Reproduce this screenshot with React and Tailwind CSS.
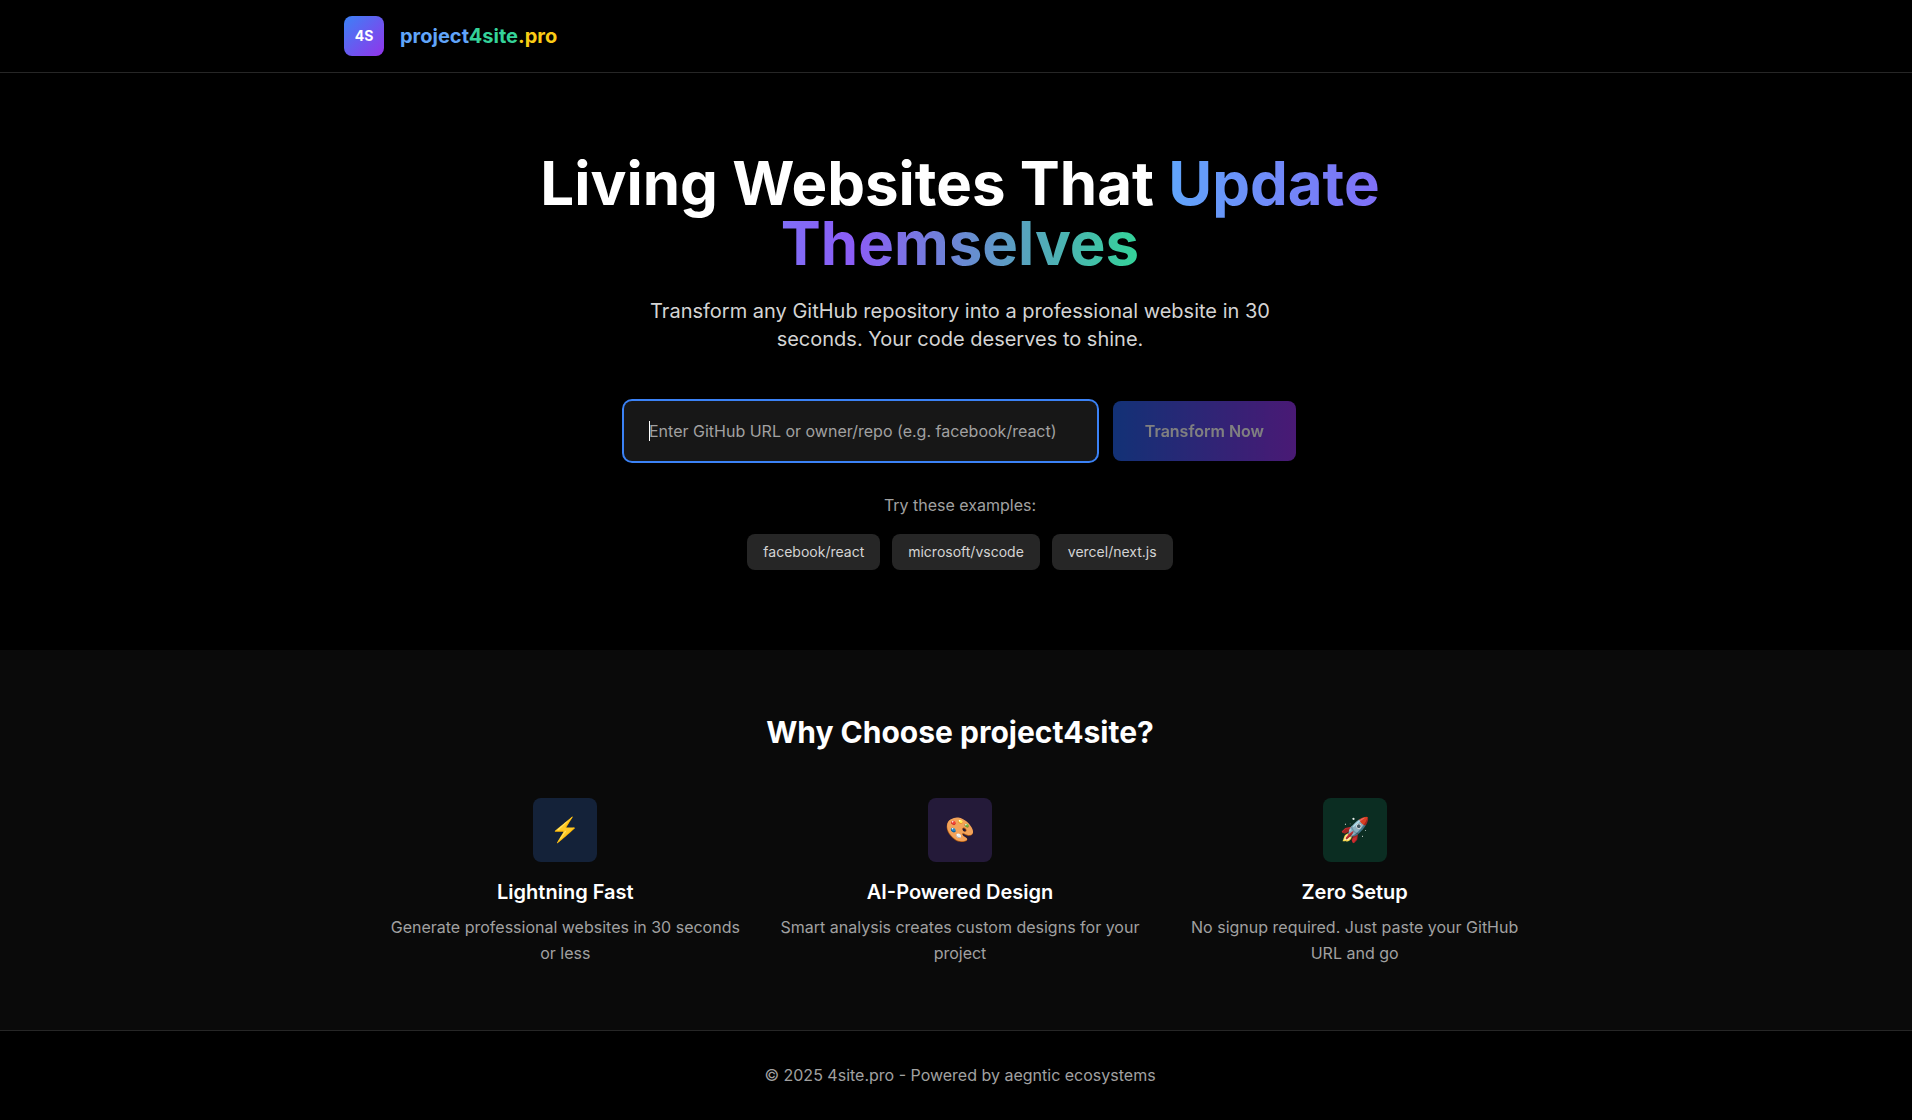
const examples = ['facebook/react', 'microsoft/vscode', 'vercel/next.js'];

const features = [
  { icon: '⚡', tint: 'bg-[#3b82f6]/20', title: 'Lightning Fast', text: 'Generate professional websites in 30 seconds or less' },
  { icon: '🎨', tint: 'bg-[#8b5cf6]/20', title: 'AI-Powered Design', text: 'Smart analysis creates custom designs for your project' },
  { icon: '🚀', tint: 'bg-[#10b981]/20', title: 'Zero Setup', text: 'No signup required. Just paste your GitHub URL and go' },
];

export default function App() {
  return (
    <div className="min-h-screen bg-black font-['Inter',sans-serif] leading-[25px] text-white">
      <header className="border-b border-neutral-800 pl-2">
        <div className="mx-auto flex max-w-7xl items-center gap-4 px-6 py-4">
          <div className="flex size-10 items-center justify-center rounded-lg bg-linear-[135deg,#3b82f6,#9333ea] text-sm font-bold">
            4S
          </div>
          <div className="text-xl font-bold">
            <span className="text-[#60a5fa]">project</span>
            <span className="text-[#34d399]">4site</span>
            <span className="text-[#facc15]">.pro</span>
          </div>
        </div>
      </header>

      <main>
        <section className="py-20 pr-6 pl-8 text-center">
          <div className="mx-auto max-w-4xl">
            <h1 className="mb-6 text-6xl leading-none font-bold">
              Living Websites That{' '}
              <span className="bg-linear-[90deg,#60a5fa,#8b5cf6,#34d399] bg-clip-text text-transparent">
                Update Themselves
              </span>
            </h1>
            <p className="mx-auto mb-12 max-w-2xl text-xl text-neutral-300">
              Transform any GitHub repository into a professional website in 30 seconds. Your code deserves to shine.
            </p>
            <form className="mx-auto mb-8 flex max-w-2xl gap-4" onSubmit={(e) => e.preventDefault()}>
              <div className="relative flex min-w-0 flex-1">
                <input
                  type="text"
                  autoFocus
                  aria-label="GitHub repository"
                  placeholder="Enter GitHub URL or owner/repo (e.g. facebook/react)"
                  className="peer w-full rounded-lg border border-transparent bg-neutral-900 px-6 py-4 leading-[26px] text-white caret-transparent ring-2 ring-[#3b82f6] outline-none placeholder:text-neutral-400"
                />
                <span
                  aria-hidden="true"
                  className="pointer-events-none absolute top-5 left-[25px] h-5 w-px bg-white peer-[:not(:placeholder-shown)]:hidden"
                />
              </div>
              <button
                type="submit"
                disabled
                className="rounded-lg bg-linear-[90deg,#2563eb,#9333ea] px-8 py-4 font-semibold disabled:opacity-50"
              >
                Transform Now
              </button>
            </form>
            <p className="mb-4 text-neutral-400">Try these examples:</p>
            <div className="flex flex-wrap justify-center gap-3">
              {examples.map((name) => (
                <button key={name} type="button" className="rounded-lg bg-neutral-800 px-4 py-2 text-sm text-neutral-300">
                  {name}
                </button>
              ))}
            </div>
          </div>
        </section>

        <section className="bg-[#0a0a0a] py-16 pr-6 pl-8">
          <div className="mx-auto max-w-6xl">
            <h2 className="mb-12 text-center text-3xl font-bold">Why Choose project4site?</h2>
            <div className="grid grid-cols-3 gap-8">
              {features.map((f) => (
                <article key={f.title} className="text-center">
                  <div className={'mx-auto mb-4 flex size-16 items-center justify-center rounded-lg text-2xl ' + f.tint}>
                    {f.icon}
                  </div>
                  <h3 className="mb-2 text-xl font-semibold">{f.title}</h3>
                  <p className="leading-[26px] text-neutral-400">{f.text}</p>
                </article>
              ))}
            </div>
          </div>
        </section>
      </main>

      <footer className="border-t border-neutral-800 py-8 pr-6 pl-8 text-center text-neutral-400">
        <p>© 2025 4site.pro - Powered by aegntic ecosystems</p>
      </footer>
    </div>
  );
}
